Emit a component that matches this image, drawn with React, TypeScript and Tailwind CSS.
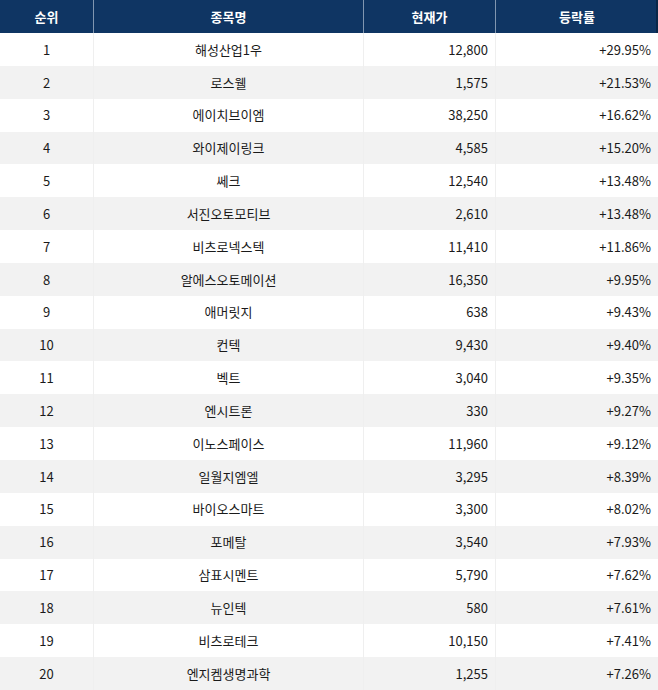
const rows: [number, string, string, string][] = [
  [1, '해성산업1우', '12,800', '+29.95%'],
  [2, '로스웰', '1,575', '+21.53%'],
  [3, '에이치브이엠', '38,250', '+16.62%'],
  [4, '와이제이링크', '4,585', '+15.20%'],
  [5, '쎄크', '12,540', '+13.48%'],
  [6, '서진오토모티브', '2,610', '+13.48%'],
  [7, '비츠로넥스텍', '11,410', '+11.86%'],
  [8, '알에스오토메이션', '16,350', '+9.95%'],
  [9, '애머릿지', '638', '+9.43%'],
  [10, '컨텍', '9,430', '+9.40%'],
  [11, '벡트', '3,040', '+9.35%'],
  [12, '엔시트론', '330', '+9.27%'],
  [13, '이노스페이스', '11,960', '+9.12%'],
  [14, '일월지엠엘', '3,295', '+8.39%'],
  [15, '바이오스마트', '3,300', '+8.02%'],
  [16, '포메탈', '3,540', '+7.93%'],
  [17, '삼표시멘트', '5,790', '+7.62%'],
  [18, '뉴인텍', '580', '+7.61%'],
  [19, '비츠로테크', '10,150', '+7.41%'],
  [20, '엔지켐생명과학', '1,255', '+7.26%'],
];

export default function App() {
  return (
    <div
      className="w-[658px] h-[690px] bg-white text-[13px] text-[#1a1a1a] overflow-hidden"
      style={{ fontFamily: '"Noto Sans CJK KR", "Noto Sans", sans-serif' }}
    >
      {/* Header */}
      <div className="grid grid-cols-[93px_270px_132px_163px] h-[33px] bg-[#0f3563] text-white font-bold border-r-2 border-[#0a2748]">
        <div className="flex items-center justify-center">순위</div>
        <div className="flex items-center justify-center border-l border-[#8096b0]">종목명</div>
        <div className="flex items-center justify-center border-l border-[#8096b0]">현재가</div>
        <div className="flex items-center justify-center border-l border-[#8096b0]">등락률</div>
      </div>

      {/* Rows */}
      {rows.map(([rank, name, price, change], i) => (
        <div
          key={rank}
          className={
            'grid grid-cols-[93px_270px_132px_163px] h-[32.85px] ' +
            (i % 2 === 0 ? 'bg-white' : 'bg-[#f2f2f2]')
          }
        >
          <div className="flex items-center justify-center">{rank}</div>
          <div className="flex items-center justify-center border-l border-[#efefef]">{name}</div>
          <div className="flex items-center justify-end pr-[7px] border-l border-[#efefef]">{price}</div>
          <div className="flex items-center justify-end pr-[7px] border-l border-[#efefef]">{change}</div>
        </div>
      ))}
    </div>
  );
}
